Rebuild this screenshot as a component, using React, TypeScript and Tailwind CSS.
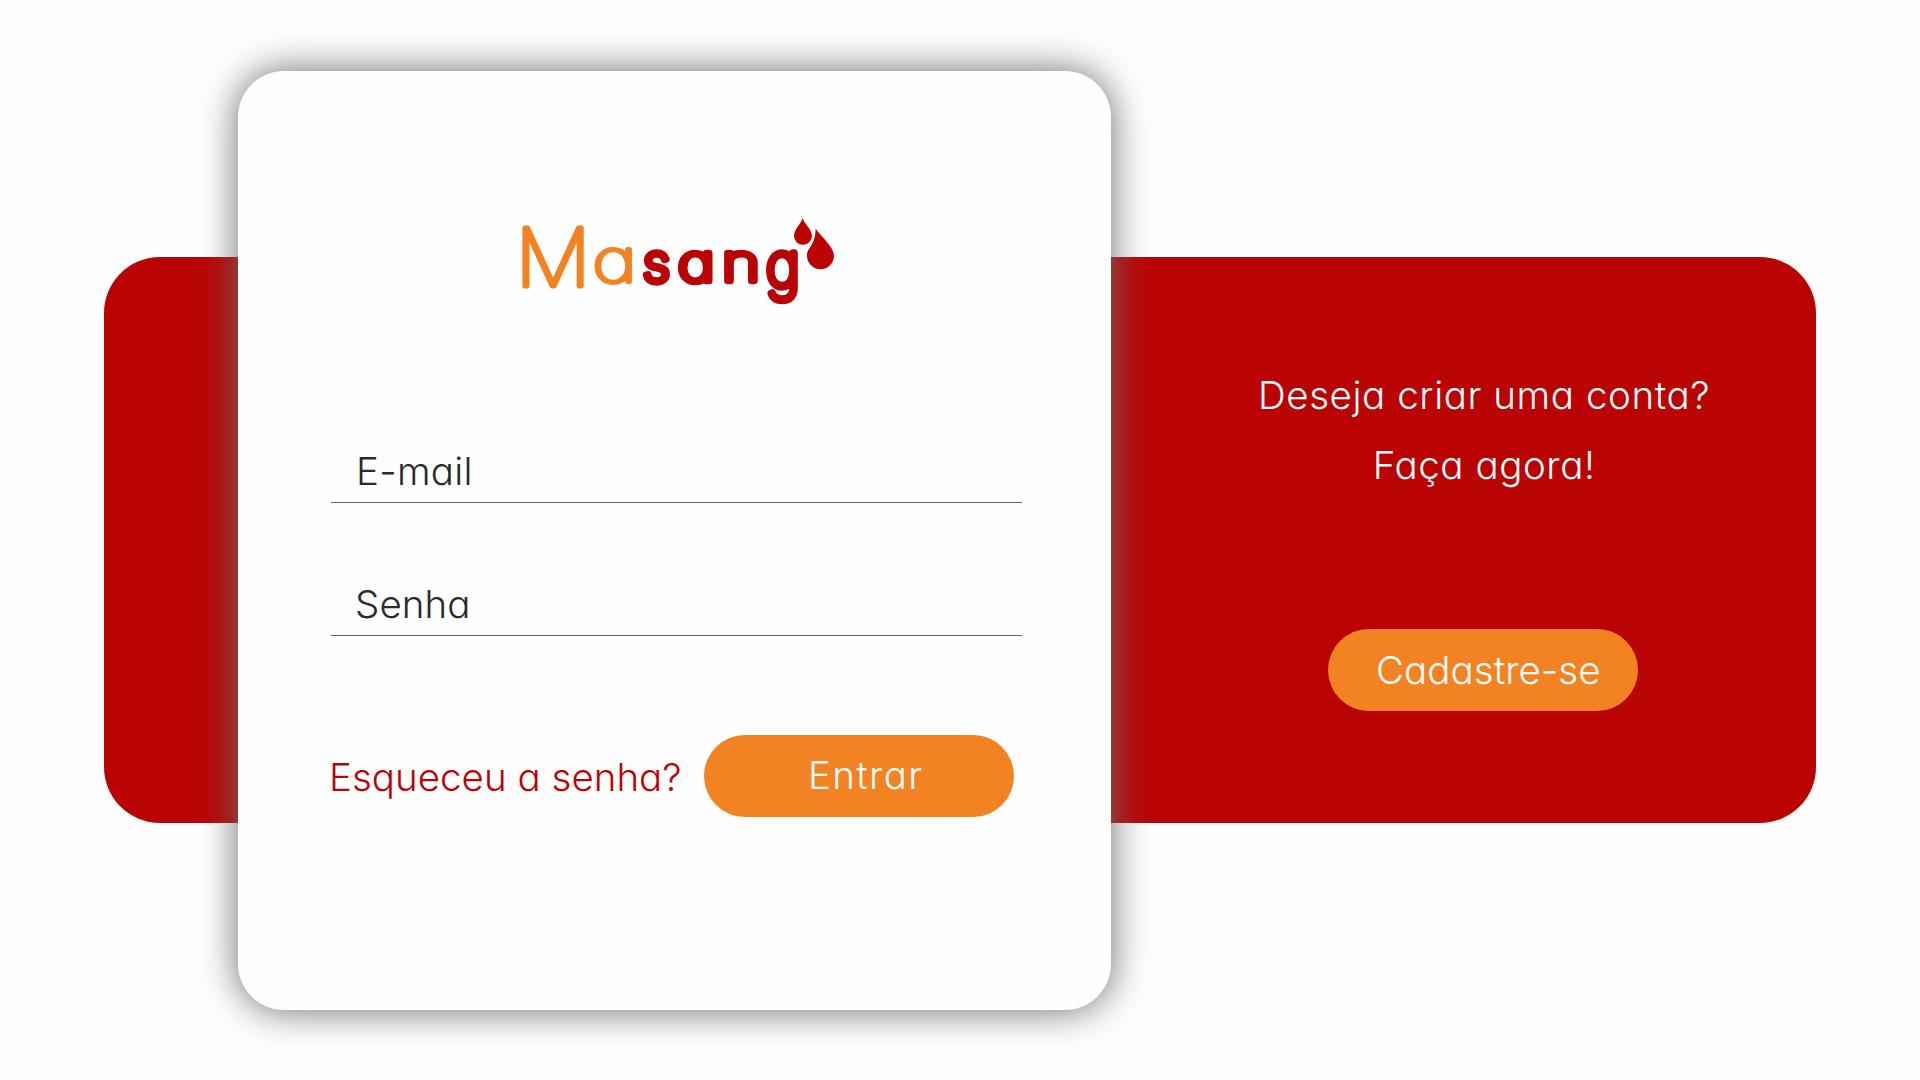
import React from "react";

type LetterProps = {
  char: string;
  x: number;
  y: number;
  size: number;
  stretch?: number;
  rise?: number;
  outline: number;
  color: string;
};

// Thin glyphs with a round-joined outline give the wordmark its soft stroke ends.
function Letter({ char, x, y, size, stretch = 1, rise = 1, outline, color }: LetterProps) {
  return (
    <text
      transform={`translate(${x} ${y}) scale(${stretch} ${rise})`}
      fontSize={size}
      fontWeight={100}
      fill={color}
      stroke={color}
      strokeWidth={outline}
      strokeLinejoin="round"
      strokeLinecap="round"
      vectorEffect="non-scaling-stroke"
    >
      {char}
    </text>
  );
}

function Logo() {
  return (
    <svg
      viewBox="500 190 350 130"
      className="h-[130px] w-[350px] font-['Inter',sans-serif] [font-feature-settings:'cv11']"
      aria-label="Masang"
    >
      <Letter char="M" x={515.6} y={285.8} size={80} stretch={1.05} outline={5} color="#f38222" />
      <Letter char="a" x={592.3} y={282.3} size={60} stretch={1.28} outline={4.5} color="#f38222" />
      <Letter char="s" x={643} y={281} size={51.5} stretch={1.05} outline={7.5} color="#ba0404" />
      <Letter char="a" x={678} y={281} size={51.5} stretch={1.22} outline={7.5} color="#ba0404" />
      <Letter char="n" x={722} y={281} size={51.5} stretch={1.26} outline={7.5} color="#ba0404" />
      <Letter char="g" x={766} y={286.5} size={51.5} stretch={1.13} rise={1.2} outline={7.5} color="#ba0404" />
      <path d="M802.6 218c1.2 5 9.4 11.5 9.4 17.8a9 9 0 0 1-18 0c0-6.3 7.2-12.3 8.6-17.8z" fill="#ba0404" />
      <path d="M815.6 228.5c5 7.5 18.4 18.5 18.4 27.2a13.5 13.5 0 0 1-27 0c0-8.5 8.6-10 8.6-27.2z" fill="#ba0404" />
    </svg>
  );
}

export default function App() {
  return (
    <main className="flex h-[1080px] w-[1920px] items-center overflow-hidden bg-[#fefefe] pl-[104px] font-['Inter',sans-serif] text-[38.5px] leading-[48px] font-light whitespace-nowrap [font-feature-settings:'cv11']">
      <section className="flex h-[566px] w-[1712px] items-center rounded-[56px] bg-[#ba0404] pl-[134px]">
        <form className="mt-px flex h-[939px] w-[873px] shrink-0 flex-col rounded-[46px] bg-[#fefefe] pl-[94px] text-[#2b2a29] shadow-[0_0_38px_#6b6b6b]">
          <div className="mt-[119px] ml-[168px]">
            <Logo />
          </div>
          <label className="mt-[127px] -ml-px flex h-[56px] w-[691px] border-b border-[#656564] pl-[25px] font-[270] tracking-[0.3px]">
            E-mail
          </label>
          <label className="mt-[77px] -ml-px flex h-[56px] w-[691px] border-b border-[#656564] pl-[24px] font-[270] tracking-[0.1px]">
            Senha
          </label>
          <div className="mt-[99px] flex items-center">
            <a className="mt-[2px] -ml-[3px] w-[375px] tracking-[0.02px] text-[#ba0404]">Esqueceu a senha?</a>
            <button type="button" className="flex h-[82px] w-[310px] items-center rounded-full bg-[#f38222] pb-[2px] pl-[104px] tracking-[1.35px] text-[#fefefe]">
              Entrar
            </button>
          </div>
        </form>
        <aside className="ml-[41px] flex flex-1 flex-col items-center text-[#fefefe]">
          <p className="mt-px text-center leading-[70px] tracking-[0.58px]">
            Deseja criar uma conta?
            <br />
            Faça agora!
          </p>
          <button type="button" className="mt-[129px] mr-[2px] mb-[10px] flex h-[82px] w-[310px] items-center rounded-full bg-[#f38222] pl-[48px] tracking-[0.05px]">
            Cadastre-se
          </button>
        </aside>
      </section>
    </main>
  );
}
